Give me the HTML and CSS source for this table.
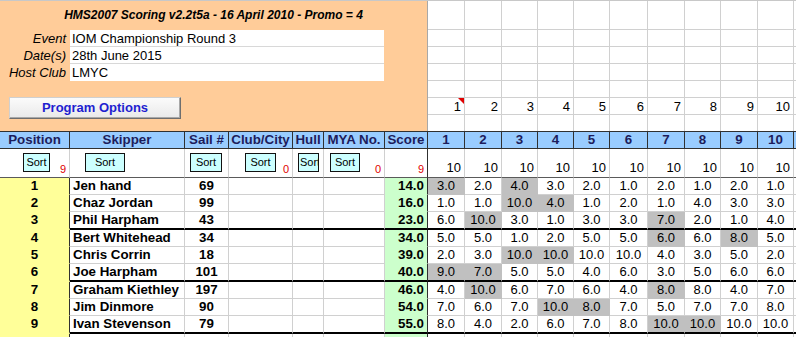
FILE: index.html
```html
<!DOCTYPE html>
<html lang="en">
<head>
<meta charset="utf-8">
<title>HMS2007 Scoring</title>
<link rel="stylesheet" href="styles.css">
</head>
<body>
<div class="top">
  <div class="panel">
    <div class="title">HMS2007 Scoring v2.2t5a - 16 April 2010 - Promo = 4</div>
    <div class="info">
      <div class="info-row"><span class="label">Event</span><span class="value">IOM Championship Round 3</span></div>
      <div class="info-row"><span class="label">Date(s)</span><span class="value">28th June 2015</span></div>
      <div class="info-row"><span class="label">Host Club</span><span class="value">LMYC</span></div>
    </div>
    <div class="spacer"></div>
    <div class="btn-row"><div class="prog-btn">Program Options</div></div>
  </div>
  <div class="topgrid">
    <div class="tg"></div><div class="tg"></div><div class="tg"></div><div class="tg"></div><div class="tg"></div><div class="tg"></div><div class="tg"></div><div class="tg"></div><div class="tg"></div><div class="tg"></div><div class="tg f"></div>
    <div class="tg"></div><div class="tg"></div><div class="tg"></div><div class="tg"></div><div class="tg"></div><div class="tg"></div><div class="tg"></div><div class="tg"></div><div class="tg"></div><div class="tg"></div><div class="tg f"></div>
    <div class="tg"></div><div class="tg"></div><div class="tg"></div><div class="tg"></div><div class="tg"></div><div class="tg"></div><div class="tg"></div><div class="tg"></div><div class="tg"></div><div class="tg"></div><div class="tg f"></div>
    <div class="tg"></div><div class="tg"></div><div class="tg"></div><div class="tg"></div><div class="tg"></div><div class="tg"></div><div class="tg"></div><div class="tg"></div><div class="tg"></div><div class="tg"></div><div class="tg f"></div>
    <div class="tg"></div><div class="tg"></div><div class="tg"></div><div class="tg"></div><div class="tg"></div><div class="tg"></div><div class="tg"></div><div class="tg"></div><div class="tg"></div><div class="tg"></div><div class="tg f"></div>
    <div class="tg rn flag">1</div><div class="tg rn">2</div><div class="tg rn">3</div><div class="tg rn">4</div><div class="tg rn">5</div><div class="tg rn">6</div><div class="tg rn">7</div><div class="tg rn">8</div><div class="tg rn">9</div><div class="tg rn">10</div><div class="tg f"></div>
    <div class="tg lr"></div><div class="tg lr"></div><div class="tg lr"></div><div class="tg lr"></div><div class="tg lr"></div><div class="tg lr"></div><div class="tg lr"></div><div class="tg lr"></div><div class="tg lr"></div><div class="tg lr"></div><div class="tg lr f"></div>
  </div>
</div>

<div class="sheet">
  <!-- header -->
  <div class="c hd">Position</div><div class="c hd">Skipper</div><div class="c hd">Sail #</div><div class="c hd">Club/City</div><div class="c hd">Hull</div><div class="c hd">MYA No.</div><div class="c hd">Score</div>
  <div class="c hd">1</div><div class="c hd">2</div><div class="c hd">3</div><div class="c hd">4</div><div class="c hd">5</div><div class="c hd">6</div><div class="c hd">7</div><div class="c hd">8</div><div class="c hd">9</div><div class="c hd">10</div><div class="c hd f"></div>

  <!-- sort row -->
  <div class="c st"><span class="sort s-pos">Sort</span><span class="cnt">9</span></div>
  <div class="c st"><span class="sort s-skip">Sort</span></div>
  <div class="c st"><span class="sort s-sail">Sort</span></div>
  <div class="c st"><span class="sort s-club">Sort</span><span class="cnt">0</span></div>
  <div class="c st"><span class="sort s-hull">Sort</span></div>
  <div class="c st"><span class="sort s-mya">Sort</span><span class="cnt">0</span></div>
  <div class="c st st-sc"><span class="cnt">9</span></div>
  <div class="c st st-r"><span>10</span></div><div class="c st st-r"><span>10</span></div><div class="c st st-r"><span>10</span></div><div class="c st st-r"><span>10</span></div><div class="c st st-r"><span>10</span></div><div class="c st st-r"><span>10</span></div><div class="c st st-r"><span>10</span></div><div class="c st st-r"><span>10</span></div><div class="c st st-r"><span>10</span></div><div class="c st st-r"><span>10</span></div><div class="c st f"></div>

  <!-- row 1 -->
  <div class="c pos">1</div><div class="c name">Jen hand</div><div class="c num">69</div><div class="c"></div><div class="c"></div><div class="c"></div><div class="c score">14.0</div>
  <div class="c r dis">3.0</div><div class="c r">2.0</div><div class="c r dis">4.0</div><div class="c r">3.0</div><div class="c r">2.0</div><div class="c r">1.0</div><div class="c r">2.0</div><div class="c r">1.0</div><div class="c r">2.0</div><div class="c r">1.0</div><div class="c f"></div>
  <!-- row 2 -->
  <div class="c pos">2</div><div class="c name">Chaz Jordan</div><div class="c num">99</div><div class="c"></div><div class="c"></div><div class="c"></div><div class="c score">16.0</div>
  <div class="c r">1.0</div><div class="c r">1.0</div><div class="c r dis">10.0</div><div class="c r dis">4.0</div><div class="c r">1.0</div><div class="c r">2.0</div><div class="c r">1.0</div><div class="c r">4.0</div><div class="c r">3.0</div><div class="c r">3.0</div><div class="c f"></div>
  <!-- row 3 -->
  <div class="c pos g3">3</div><div class="c name g3">Phil Harpham</div><div class="c num g3">43</div><div class="c g3"></div><div class="c g3"></div><div class="c g3"></div><div class="c score g3">23.0</div>
  <div class="c r g3">6.0</div><div class="c r dis g3">10.0</div><div class="c r g3">3.0</div><div class="c r g3">1.0</div><div class="c r g3">3.0</div><div class="c r g3">3.0</div><div class="c r dis g3">7.0</div><div class="c r g3">2.0</div><div class="c r g3">1.0</div><div class="c r g3">4.0</div><div class="c f g3"></div>
  <!-- row 4 -->
  <div class="c pos">4</div><div class="c name">Bert Whitehead</div><div class="c num">34</div><div class="c"></div><div class="c"></div><div class="c"></div><div class="c score">34.0</div>
  <div class="c r">5.0</div><div class="c r">5.0</div><div class="c r">1.0</div><div class="c r">2.0</div><div class="c r">5.0</div><div class="c r">5.0</div><div class="c r dis">6.0</div><div class="c r">6.0</div><div class="c r dis">8.0</div><div class="c r">5.0</div><div class="c f"></div>
  <!-- row 5 -->
  <div class="c pos">5</div><div class="c name">Chris Corrin</div><div class="c num">18</div><div class="c"></div><div class="c"></div><div class="c"></div><div class="c score">39.0</div>
  <div class="c r">2.0</div><div class="c r">3.0</div><div class="c r dis">10.0</div><div class="c r dis">10.0</div><div class="c r">10.0</div><div class="c r">10.0</div><div class="c r">4.0</div><div class="c r">3.0</div><div class="c r">5.0</div><div class="c r">2.0</div><div class="c f"></div>
  <!-- row 6 -->
  <div class="c pos g3">6</div><div class="c name g3">Joe Harpham</div><div class="c num g3">101</div><div class="c g3"></div><div class="c g3"></div><div class="c g3"></div><div class="c score g3">40.0</div>
  <div class="c r dis g3">9.0</div><div class="c r dis g3">7.0</div><div class="c r g3">5.0</div><div class="c r g3">5.0</div><div class="c r g3">4.0</div><div class="c r g3">6.0</div><div class="c r g3">3.0</div><div class="c r g3">5.0</div><div class="c r g3">6.0</div><div class="c r g3">6.0</div><div class="c f g3"></div>
  <!-- row 7 -->
  <div class="c pos">7</div><div class="c name">Graham Kiethley</div><div class="c num">197</div><div class="c"></div><div class="c"></div><div class="c"></div><div class="c score">46.0</div>
  <div class="c r">4.0</div><div class="c r dis">10.0</div><div class="c r">6.0</div><div class="c r">7.0</div><div class="c r">6.0</div><div class="c r">4.0</div><div class="c r dis">8.0</div><div class="c r">8.0</div><div class="c r">4.0</div><div class="c r">7.0</div><div class="c f"></div>
  <!-- row 8 -->
  <div class="c pos">8</div><div class="c name">Jim Dinmore</div><div class="c num">90</div><div class="c"></div><div class="c"></div><div class="c"></div><div class="c score">54.0</div>
  <div class="c r">7.0</div><div class="c r">6.0</div><div class="c r">7.0</div><div class="c r dis">10.0</div><div class="c r dis">8.0</div><div class="c r">7.0</div><div class="c r">5.0</div><div class="c r">7.0</div><div class="c r">7.0</div><div class="c r">8.0</div><div class="c f"></div>
  <!-- row 9 -->
  <div class="c pos g3">9</div><div class="c name g3">Ivan Stevenson</div><div class="c num g3">79</div><div class="c g3"></div><div class="c g3"></div><div class="c g3"></div><div class="c score g3">55.0</div>
  <div class="c r g3">8.0</div><div class="c r g3">4.0</div><div class="c r g3">2.0</div><div class="c r g3">6.0</div><div class="c r g3">7.0</div><div class="c r g3">8.0</div><div class="c r dis g3">10.0</div><div class="c r dis g3">10.0</div><div class="c r g3">10.0</div><div class="c r g3">10.0</div><div class="c f g3"></div>
  <!-- row 10 (partial) -->
  <div class="c pos"></div><div class="c"></div><div class="c"></div><div class="c"></div><div class="c"></div><div class="c"></div><div class="c score"></div>
  <div class="c"></div><div class="c"></div><div class="c"></div><div class="c"></div><div class="c"></div><div class="c"></div><div class="c"></div><div class="c"></div><div class="c"></div><div class="c"></div><div class="c f"></div>
</div>
</body>
</html>
```
FILE: styles.css
```css
* { box-sizing: border-box; }

html, body {
  margin: 0;
  padding: 0;
  background: #ffffff;
}

body {
  width: 796px;
  height: 337px;
  overflow: hidden;
  font-family: "Liberation Sans", Arial, sans-serif;
  font-size: 13.33px;
  color: #000000;
}

/* ---------- top area ---------- */
.top {
  display: flex;
  height: 131px;
  border-top: 1px solid #c8c8c8;
}

.panel {
  width: 428px;
  flex: none;
  background: #ffcc99;
  border-right: 1px solid #a8a8a8;
  display: flex;
  flex-direction: column;
}

.title {
  height: 29px;
  line-height: 29px;
  text-align: center;
  font-size: 12px;
  font-weight: bold;
  font-style: italic;
}

.info-row {
  display: flex;
  height: 17px;
}

.label {
  width: 70px;
  flex: none;
  padding-right: 4px;
  text-align: right;
  font-size: 13px;
  font-style: italic;
  line-height: 17px;
}

.value {
  width: 314px;
  flex: none;
  background: #ffffff;
  padding-left: 2px;
  font-size: 13px;
  line-height: 17px;
  border-bottom: 1px solid #d8d8d8;
}

.info-row:last-child .value {
  border-bottom: none;
}

.spacer {
  height: 16px;
}

.btn-row {
  padding-left: 9px;
}

.prog-btn {
  width: 172px;
  height: 22px;
  background: linear-gradient(#fbfbfb, #e9e9e9);
  border: 1px solid #d0d0d0;
  border-right-color: #6e6e6e;
  border-bottom-color: #6e6e6e;
  box-shadow: inset -1px -1px 0 #a8a8a8;
  color: #1f1fd0;
  font-size: 13px;
  font-weight: bold;
  line-height: 20px;
  text-align: center;
}

.topgrid {
  flex: 1;
  display: grid;
  grid-template-columns: 37px 37px 36px 36px 36px 38px 37px 36px 37px 36px 1fr;
  grid-template-rows: 29px 17px 17px 17px 17px 17px 16px;
}

.tg {
  border-right: 1px solid #d0d0d0;
  border-bottom: 1px solid #d0d0d0;
}

.tg.lr { border-bottom: none; }
.tg.f { border-right: none; }

.tg.rn {
  text-align: right;
  padding: 1px 3px 0 0;
  font-size: 13px;
  line-height: 16px;
}

.tg.flag { position: relative; }
.tg.flag::after {
  content: "";
  position: absolute;
  top: 0;
  right: 0;
  border-top: 6px solid #e00000;
  border-left: 6px solid transparent;
}

/* ---------- sheet ---------- */
.sheet {
  display: grid;
  grid-template-columns: 70px 115px 44px 64px 31px 61px 43px 37px 37px 36px 36px 36px 38px 37px 36px 37px 36px 1fr;
  grid-template-rows: 18px 29px 17px 17px 18px 17px 17px 18px 17px 17px 18px 17px;
}

.c {
  border-right: 1px solid #d0d0d0;
  border-bottom: 1px solid #d0d0d0;
  padding: 0 3px;
  line-height: 16px;
  white-space: nowrap;
  overflow: hidden;
}

.hd {
  background: #99ccff;
  border-top: 1px solid #303030;
  border-bottom: 1px solid #303030;
  border-right: 1px solid #303030;
  padding: 0;
  text-align: center;
  font-weight: bold;
  color: #1d1d5c;
}

.st {
  display: flex;
  align-items: flex-start;
  padding: 4px 3px 0 0;
  border-bottom: 1px solid #5a5a5a;
}

.st-sc { border-right-color: #303030; }

.st-r {
  justify-content: flex-end;
  align-items: flex-end;
  padding: 0 3px 1px 0;
  font-size: 13px;
}

.sort {
  flex: none;
  height: 19px;
  background: #ccffff;
  border: 1px solid #111111;
  font-size: 11px;
  line-height: 17px;
  text-align: center;
  overflow: hidden;
  white-space: nowrap;
}

.s-pos  { margin-left: 23px; width: 27px; }
.s-skip { margin-left: 15px; width: 40px; }
.s-sail { margin-left: 5px;  width: 32px; }
.s-club { margin-left: 16px; width: 31px; }
.s-hull { margin-left: 5px;  width: 21px; text-align: left; padding-left: 1px; }
.s-mya  { margin-left: 6px;  width: 30px; }

.cnt {
  margin-left: auto;
  align-self: flex-end;
  margin-bottom: 2px;
  color: #e00000;
  font-size: 11px;
  line-height: 12px;
}

.pos {
  background: #ffff99;
  border-right-color: #303030;
  border-bottom-color: #ffff99;
  text-align: center;
  font-weight: bold;
}

.name { font-weight: bold; }

.num {
  text-align: center;
  font-weight: bold;
}

.score {
  background: #ccffcc;
  border-right-color: #303030;
  border-bottom-color: #ccffcc;
  text-align: right;
  font-weight: bold;
}

.r {
  text-align: center;
  font-size: 13px;
  padding: 0;
}

.dis {
  background: #c0c0c0;
  border-right-color: #c0c0c0;
  border-bottom-color: #c0c0c0;
}

.g3 { border-bottom: 2px solid #000000; }
.pos.g3 { border-bottom-color: #ffff99; }

.f { border-right: none; }
```
